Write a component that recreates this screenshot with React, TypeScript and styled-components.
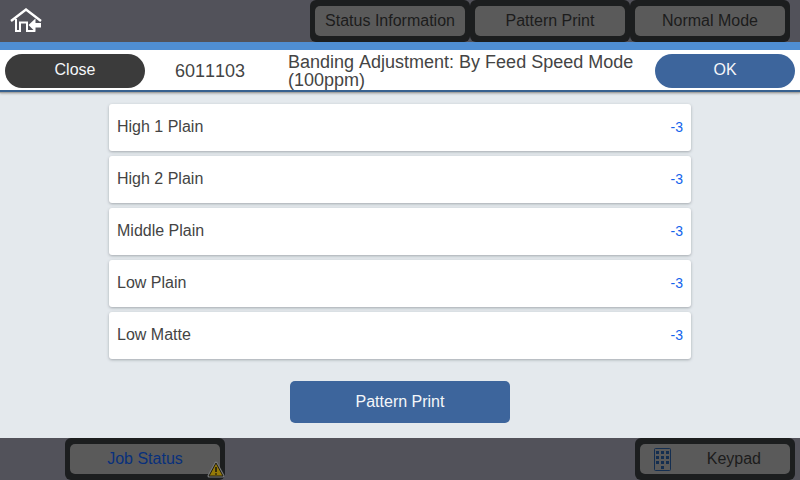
import React from "react";
import styled, { createGlobalStyle } from "styled-components";

const GlobalStyle = createGlobalStyle`
  * { box-sizing: border-box; }
  body {
    margin: 0;
    background: #e4e9ed;
    color: #444;
    font-family: "Liberation Sans", Arial, sans-serif;
    font-size: 16px;
    font-kerning: none;
  }
  button { font: inherit; font-kerning: none; cursor: pointer; }
`;

const Screen = styled.div`
  display: flex;
  flex-direction: column;
  min-height: 100vh;
`;

const SystemBar = styled.header`
  display: flex;
  align-items: center;
  justify-content: space-between;
  height: 42px;
  padding: 0 10px;
  background: #52525a;
`;

const HomeButton = styled.button`
  display: flex;
  padding: 0;
  border: 0;
  background: none;
`;

const ModeGroup = styled.nav`
  display: flex;
`;

const Slot = styled.div`
  position: relative;
  width: 160px;
  height: 42px;
  padding: 6px 5px;
  border-radius: 6px;
  background: #1c1e1f;
`;

const DimButton = styled.button<{ $accent?: boolean }>`
  display: flex;
  align-items: center;
  justify-content: center;
  width: 100%;
  height: 30px;
  padding: 0;
  border: 0;
  border-radius: 5px;
  background: #5a5a5a;
  color: ${(p) => (p.$accent ? "#08307c" : "#1c1c1c")};
  line-height: 18px;
`;

const KeypadButton = styled(DimButton)`
  justify-content: space-between;
  padding: 0 29px 0 14px;
`;

const TitleBar = styled.div`
  display: flex;
  align-items: center;
  height: 50px;
  padding: 2px 5px 0;
  background: #fff;
  border-top: 8px solid #4f8ed3;
  border-bottom: 2px solid #37618f;
  box-shadow: 0 1px 1px #a5a5a2, 0 2px 2px #bcbfc2;
`;

const PillButton = styled.button<{ $primary?: boolean }>`
  flex: none;
  width: 140px;
  height: 34px;
  padding: 0 0 2px;
  border: 0;
  border-radius: 17px;
  background: ${(p) => (p.$primary ? "#3d659c" : "#3b3b3b")};
  color: #f4f6f9;
`;

const Code = styled.span`
  flex: none;
  width: 143px;
  padding-left: 30px;
  font-size: 18px;
  line-height: 18px;
`;

const Title = styled.h1`
  flex: 1;
  margin: 0;
  font-size: 18px;
  font-weight: 400;
  line-height: 18px;
`;

const Content = styled.main`
  display: flex;
  flex: 1;
  flex-direction: column;
  align-items: center;
  gap: 22px;
  padding: 12px 16px 15px;
`;

const SettingList = styled.ul`
  display: flex;
  flex-direction: column;
  gap: 5px;
  width: 100%;
  max-width: 582px;
  margin: 0;
  padding: 0;
  list-style: none;
`;

const SettingRow = styled.button`
  display: flex;
  align-items: center;
  justify-content: space-between;
  width: 100%;
  height: 47px;
  padding: 0 8px 1px;
  border: 0;
  border-radius: 3px;
  background: #fff;
  color: #444;
  box-shadow: 0 1px 3px #a3a9ae;
`;

const Value = styled.span`
  color: #1464ec;
  font-size: 14px;
`;

const PrintButton = styled.button`
  width: 220px;
  height: 42px;
  padding: 0 0 1px;
  border: 0;
  border-radius: 5px;
  background: #3d659c;
  color: #f4f6f9;
`;

const StatusBar = styled.footer`
  display: flex;
  justify-content: space-between;
  height: 42px;
  padding: 0 5px 0 65px;
  background: #52525a;
`;

const Warning = styled.svg`
  position: absolute;
  right: 0;
  bottom: 2px;
`;

const settings = [
  { name: "High 1 Plain", value: "-3" },
  { name: "High 2 Plain", value: "-3" },
  { name: "Middle Plain", value: "-3" },
  { name: "Low Plain", value: "-3" },
  { name: "Low Matte", value: "-3" },
];

const HomeIcon = () => (
  <svg width="32" height="26" viewBox="0 0 32 26" aria-hidden="true">
    <path d="M1 13 16 1.5 31 13" fill="none" stroke="#fff" strokeWidth="2.4" />
    <path d="M6 11V23H10V14.5H17V23H25" fill="none" stroke="#fff" strokeWidth="2" />
    <path d="M18.5 17 25.5 10.5V15H31V19.5H25.5V24Z" fill="#fff" />
  </svg>
);

const WarningIcon = () => (
  <Warning width="18" height="17" viewBox="0 0 18 17" aria-hidden="true">
    <path d="M9 2 16 15H2Z" fill="#8a700a" stroke="#77797b" strokeWidth="3" strokeLinejoin="round" />
    <path d="M9 2 16 15H2Z" fill="#957a08" stroke="#211e12" strokeWidth="1" strokeLinejoin="round" />
    <path d="M9 6V11M9 12.2V13.8" stroke="#17150c" strokeWidth="1.5" />
  </Warning>
);

const keys = [
  [2, 3], [7, 3], [12, 3],
  [2, 8], [7, 8], [12, 8],
  [2, 13], [7, 13], [12, 13],
  [7, 18],
];

const KeypadIcon = () => (
  <svg width="17" height="23" viewBox="0 0 17 23" aria-hidden="true">
    <rect x="0.5" y="0.5" width="16" height="22" rx="1" fill="none" stroke="#142e50" />
    {keys.map(([x, y]) => (
      <rect key={`${x}-${y}`} x={x} y={y} width="3" height="3" fill="#142e50" />
    ))}
  </svg>
);

export default function App() {
  return (
    <Screen>
      <GlobalStyle />
      <SystemBar>
        <HomeButton aria-label="Home">
          <HomeIcon />
        </HomeButton>
        <ModeGroup>
          {["Status Information", "Pattern Print", "Normal Mode"].map((label) => (
            <Slot key={label}>
              <DimButton>{label}</DimButton>
            </Slot>
          ))}
        </ModeGroup>
      </SystemBar>
      <TitleBar>
        <PillButton>Close</PillButton>
        <Code>6011103</Code>
        <Title>Banding Adjustment: By Feed Speed Mode (100ppm)</Title>
        <PillButton $primary>OK</PillButton>
      </TitleBar>
      <Content>
        <SettingList>
          {settings.map((s) => (
            <li key={s.name}>
              <SettingRow>
                <span>{s.name}</span>
                <Value>{s.value}</Value>
              </SettingRow>
            </li>
          ))}
        </SettingList>
        <PrintButton>Pattern Print</PrintButton>
      </Content>
      <StatusBar>
        <Slot>
          <DimButton $accent>Job Status</DimButton>
          <WarningIcon />
        </Slot>
        <Slot>
          <KeypadButton>
            <KeypadIcon />
            <span>Keypad</span>
          </KeypadButton>
        </Slot>
      </StatusBar>
    </Screen>
  );
}
